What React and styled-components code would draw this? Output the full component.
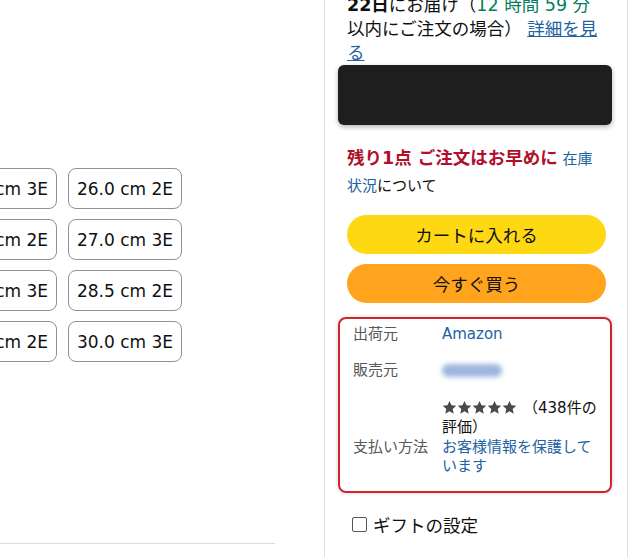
import styled, { createGlobalStyle } from "styled-components";

const GlobalStyle = createGlobalStyle`
  html, body {
    margin: 0;
    padding: 0;
    background: #fff;
    overflow: hidden;
  }
  body {
    font-family: "DejaVu Sans", "Noto Sans CJK JP", sans-serif;
    color: #0f1111;
  }
`;

const Page = styled.div`
  display: flex;
  width: 635px;
  height: 557px;
  overflow: hidden;
`;

const LeftPane = styled.div`
  flex: none;
  width: 324px;
  display: flex;
  flex-direction: column;
  padding-top: 168px;
  box-sizing: border-box;
`;

const SizeGrid = styled.div`
  display: grid;
  grid-template-columns: repeat(2, 114px);
  column-gap: 11px;
  row-gap: 10px;
  margin-left: -57px;
`;

const SizeButton = styled.button`
  height: 41px;
  border: 1px solid #8d9096;
  border-radius: 8px;
  background: #fff;
  font-family: "DejaVu Sans", sans-serif;
  font-size: 17px;
  color: #0f1111;
  padding: 0;
  display: flex;
  align-items: center;
  justify-content: center;
  white-space: nowrap;
`;

const Divider = styled.div`
  margin-top: auto;
  margin-bottom: 13px;
  width: 275px;
  height: 1px;
  background: #dddddd;
`;

const RightPane = styled.div`
  flex: none;
  width: 304px;
  border-left: 1px solid #dddddd;
  border-right: 1px solid #dddddd;
  padding: 0 15px 0 13px;
  box-sizing: border-box;
`;

const Indent = styled.div`
  padding: 0 6px 0 9px;
`;

const Delivery = styled.div`
  margin-top: -7px;
  font-size: 17.5px;
  line-height: 24px;
`;

const Bold = styled.b`
  font-weight: 700;
`;

const Green = styled.span`
  color: #067d62;
`;

const Link = styled.a`
  color: #2162a1;
  text-decoration: ${(p) => (p.$underline ? "underline" : "none")};
`;

const Redacted = styled.div`
  height: 60px;
  background: #1e1e1e;
  border-radius: 6px;
  box-shadow: 0 2px 5px rgba(0, 0, 0, 0.3);
`;

const Stock = styled.div`
  margin-top: 20px;
  font-size: 15px;
  line-height: 27px;
`;

const StockAlert = styled.span`
  color: #b1102b;
  font-weight: 700;
  font-size: 17.5px;
`;

const ActionButton = styled.button`
  display: block;
  width: 100%;
  height: 39px;
  margin-top: ${(p) => p.$top}px;
  border: none;
  border-radius: 20px;
  background: ${(p) => p.$bg};
  font-family: "Noto Sans CJK JP", sans-serif;
  font-size: 17.5px;
  color: #0f1111;
`;

const InfoBox = styled.div`
  margin-top: 14px;
  border: 2px solid #d3232e;
  border-radius: 8px;
  box-shadow: 0 0 4px rgba(0, 0, 0, 0.18);
  padding: 6px 11px 15px 13px;
  font-size: 15px;
  line-height: 19px;
`;

const InfoRow = styled.div`
  display: grid;
  grid-template-columns: 89px 1fr;
  margin-top: ${(p) => p.$top || 0}px;
`;

const Label = styled.div`
  color: #565959;
`;

const Value = styled.div`
  color: #0f1111;
`;

const Blurred = styled.div`
  width: 60px;
  height: 13px;
  margin: 3px 0 3px 0;
  border-radius: 6px;
  background: #9cb6dc;
  filter: blur(2.5px);
`;

const Stars = styled.span`
  display: inline-flex;
  gap: 0;
  vertical-align: -2px;
  margin-right: 6px;
`;

const Gift = styled.label`
  display: flex;
  align-items: center;
  gap: 6px;
  margin: 19px 0 0 14px;
  font-family: "Noto Sans CJK JP", sans-serif;
  font-size: 17.5px;
`;

const CheckBox = styled.span`
  width: 13px;
  height: 13px;
  border: 1px solid #555;
  border-radius: 2px;
  background: #fff;
`;

const Star = () => (
  <svg width="15" height="15" viewBox="0 0 24 24">
    <path
      d="M12 1.5l3.2 7 7.6.8-5.7 5.1 1.6 7.5L12 18l-6.7 3.9 1.6-7.5L1.2 9.3l7.6-.8z"
      fill="#4a4a4a"
    />
  </svg>
);

const sizes = [
  "25.5 cm 3E",
  "26.0 cm 2E",
  "26.5 cm 2E",
  "27.0 cm 3E",
  "28.0 cm 3E",
  "28.5 cm 2E",
  "29.0 cm 2E",
  "30.0 cm 3E",
];

const App = () => {
  return (
    <>
      <GlobalStyle />
      <Page>
        <LeftPane>
          <SizeGrid>
            {sizes.map((s) => (
              <SizeButton key={s}>{s}</SizeButton>
            ))}
          </SizeGrid>
          <Divider />
        </LeftPane>
        <RightPane>
          <Indent>
            <Delivery>
              <Bold>22日</Bold>にお届け（<Green>12 時間 59 分</Green>
              <br />
              以内にご注文の場合） <Link $underline>詳細を見る</Link>
            </Delivery>
          </Indent>
          <Redacted />
          <Indent>
            <Stock>
              <StockAlert>残り1点 ご注文はお早めに</StockAlert> <Link>在庫</Link>
              <br />
              <Link>状況</Link>について
            </Stock>
            <ActionButton $top={15} $bg="#ffd814">カートに入れる</ActionButton>
            <ActionButton $top={10} $bg="#ffa41c">今すぐ買う</ActionButton>
          </Indent>
          <InfoBox>
            <InfoRow>
              <Label>出荷元</Label>
              <Value>
                <Link>Amazon</Link>
              </Value>
            </InfoRow>
            <InfoRow $top={17}>
              <Label>販売元</Label>
              <Value>
                <Blurred />
              </Value>
            </InfoRow>
            <InfoRow $top={19}>
              <Label />
              <Value>
                <Stars>
                  <Star />
                  <Star />
                  <Star />
                  <Star />
                  <Star />
                </Stars>
                （438件の評価）
              </Value>
            </InfoRow>
            <InfoRow $top={1}>
              <Label>支払い方法</Label>
              <Value>
                <Link>お客様情報を保護しています</Link>
              </Value>
            </InfoRow>
          </InfoBox>
          <Gift>
            <CheckBox />
            ギフトの設定
          </Gift>
        </RightPane>
      </Page>
    </>
  );
};

export default App;
